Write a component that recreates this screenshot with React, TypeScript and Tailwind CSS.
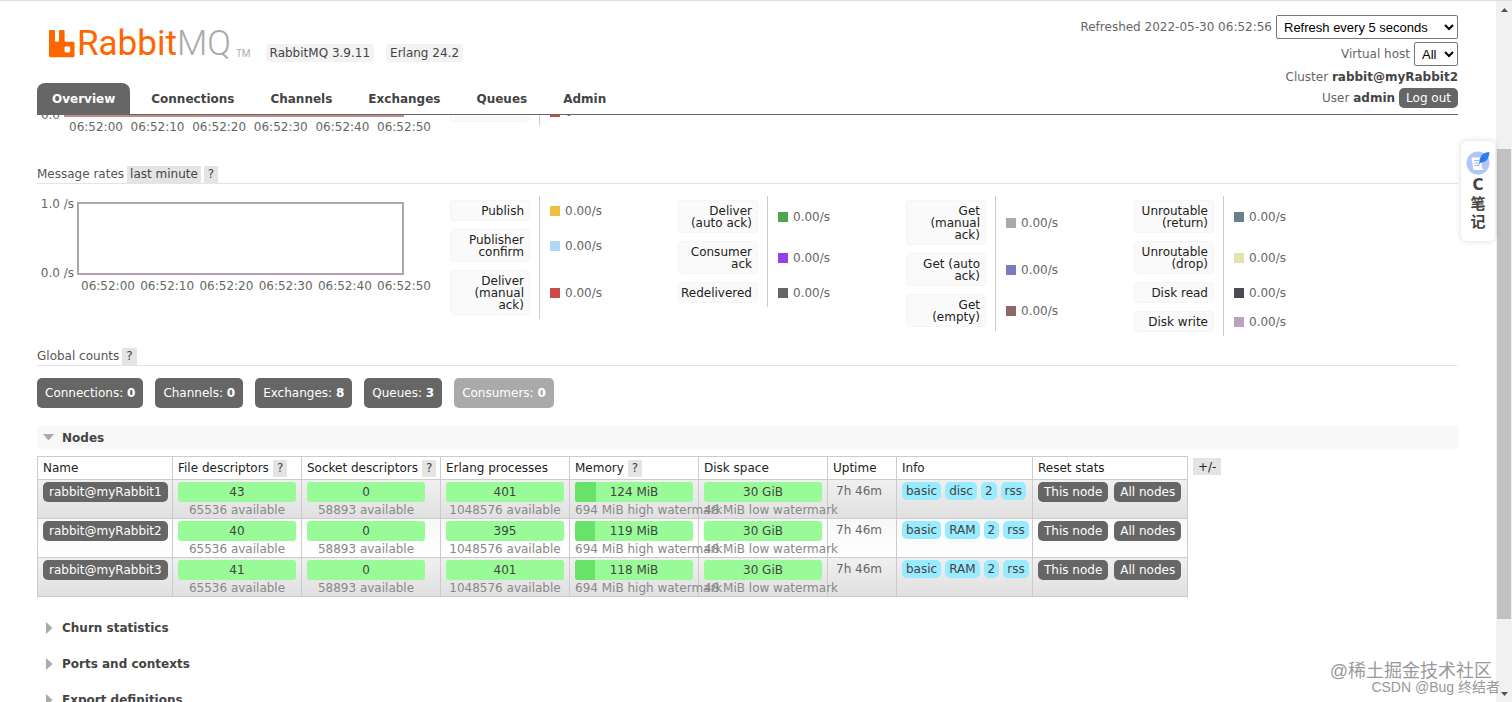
import { ReactNode } from "react";

const TABS = ["Overview", "Connections", "Channels", "Exchanges", "Queues", "Admin"];

const TIMES = ["06:52:00", "06:52:10", "06:52:20", "06:52:30", "06:52:40", "06:52:50"];

const RATES = [
  [
    { label: "Publish", color: "bg-[#edc240]" },
    { label: "Publisher\nconfirm", color: "bg-[#afd8f8]" },
    { label: "Deliver\n(manual\nack)", color: "bg-[#cb4b4b]" },
  ],
  [
    { label: "Deliver\n(auto ack)", color: "bg-[#4da74d]" },
    { label: "Consumer\nack", color: "bg-[#9440ed]" },
    { label: "Redelivered", color: "bg-[#666666]" },
  ],
  [
    { label: "Get\n(manual\nack)", color: "bg-[#aaaaaa]" },
    { label: "Get (auto\nack)", color: "bg-[#7c79c3]" },
    { label: "Get\n(empty)", color: "bg-[#8e6767]" },
  ],
  [
    { label: "Unroutable\n(return)", color: "bg-[#67808e]" },
    { label: "Unroutable\n(drop)", color: "bg-[#e5e4ae]" },
    { label: "Disk read", color: "bg-[#4b4a55]" },
    { label: "Disk write", color: "bg-[#bba3bf]" },
  ],
];

const COUNTS = [
  { label: "Connections", value: 0 },
  { label: "Channels", value: 0 },
  { label: "Exchanges", value: 8 },
  { label: "Queues", value: 3 },
  { label: "Consumers", value: 0, disabled: true },
];

const NODES = [
  { name: "rabbit@myRabbit1", fd: 43, procs: 401, mem: 124, type: "disc" },
  { name: "rabbit@myRabbit2", fd: 40, procs: 395, mem: 119, type: "RAM" },
  { name: "rabbit@myRabbit3", fd: 41, procs: 401, mem: 118, type: "RAM" },
];

const MEM_LIMIT = 694;

function Help() {
  return (
    <button className="h-[17px] bg-[#e4e4e4] px-1 text-[#444]">?</button>
  );
}

function Heading({ children }: { children: ReactNode }) {
  return (
    <h2 className="flex h-[19px] items-center gap-[3px] border-b border-[#e4e4e4] text-[#555]">
      {children}
    </h2>
  );
}

type Rate = { label: string; color: string };

function Legend({ items, value }: { items: Rate[]; value: string }) {
  return (
    <table className="border-collapse self-start">
      <tbody>
        {items.map(({ label, color }) => (
          <tr key={label}>
            <th className="border-r border-[#ccc] py-1 pr-[9px] font-normal">
              <div className="w-20 whitespace-pre-line rounded-sm border border-[#f5f5f5] bg-[#fafafa] pt-1 pr-[5px] pb-[3px] text-right leading-3 text-[#222]">
                {label}
              </div>
            </th>
            <td className="pl-2.5">
              <div className="flex items-center gap-[5px]">
                <span className={`size-2.5 ${color}`} />
                {value}
              </div>
            </td>
          </tr>
        ))}
      </tbody>
    </table>
  );
}

function Bar({ value, note, used = 0 }: { value: string; note: string; used?: number }) {
  return (
    <div className="w-[118px] text-center whitespace-nowrap">
      <div className="relative h-5 overflow-hidden rounded-[3px] bg-[#98fb98] leading-5 text-[#444]">
        <div
          className="absolute inset-y-0 left-0 bg-[#69e269]"
          style={{ width: `${used}%` }}
        />
        <span className="relative">{value}</span>
      </div>
      <div className="leading-4 text-[#888]">{note}</div>
    </div>
  );
}

function Logo() {
  return (
    <a href="#" className="flex items-end" aria-label="RabbitMQ">
      <svg width="26" height="28" viewBox="0 0 26 28" className="mb-1">
        <path
          fill="#ff6600"
          d="M1.200 0h3.600c.7 0 1.200.5 1.200 1.200v9.300c0 .8.400 1.200 1.200 1.200h1.600c.8 0 1.200-.4 1.200-1.200V1.200C10 .5 10.500 0 11.200 0h3.200c.7 0 1.200.5 1.200 1.200v9.300c0 .8.400 1.200 1.200 1.200h7.200c.8 0 1.500.6 1.500 1.400v12.700c0 .8-.6 1.400-1.400 1.400H1.400C.6 27.200 0 26.600 0 25.800V1.200C0 .5.500 0 1.200 0Zm14.300 18v3c0 .8.600 1.400 1.400 1.400h2.900c.8 0 1.400-.6 1.400-1.400v-3c0-.8-.6-1.400-1.400-1.400h-2.900c-.8 0-1.400.6-1.400 1.400Z"
          fillRule="evenodd"
        />
      </svg>
      <span className="ml-0.5 font-[Roboto] text-[35px] leading-9 text-[#ff6600]">
        Rabbit<span className="font-light text-[#aaa]">MQ</span>
      </span>
      <span className="ml-[5px] font-[Roboto] text-[10px] leading-4 text-[#b0b0b0]">TM</span>
    </a>
  );
}

function Header() {
  return (
    <header className="flex h-[114px] shrink-0 justify-between border-b border-[#666] bg-white">
      <div className="flex flex-col justify-between">
        <div className="flex items-end gap-[15px] pt-[25px] pl-3">
          <Logo />
          <div className="flex gap-3 text-[#444]">
            <span className="rounded-sm bg-[#f3f3f3] px-1 leading-[18px]">RabbitMQ 3.9.11</span>
            <span className="rounded-sm bg-[#f3f3f3] px-1 leading-[18px]">Erlang 24.2</span>
          </div>
        </div>
        <nav className="flex gap-1.5">
          {TABS.map((tab) => (
            <a
              key={tab}
              href="#"
              className={`rounded-t-lg px-[15px] pt-px leading-[30px] font-bold ${
                tab === "Overview" ? "bg-[#666] text-white" : "text-[#444]"
              }`}
            >
              {tab}
            </a>
          ))}
        </nav>
      </div>

      <div className="flex flex-col items-end pt-3.5">
        <label className="flex items-center gap-1">
          Refreshed 2022-05-30 06:52:56
          <select className="h-6 w-[182px] rounded-xs border border-[#767676] bg-white px-[3px] font-['Liberation_Sans'] text-[13px] text-black">
            <option>Refresh every 5 seconds</option>
          </select>
        </label>
        <label className="mt-[3px] flex items-center gap-1">
          Virtual host
          <select className="h-6 w-11 rounded-xs border border-[#767676] bg-white px-[3px] font-['Liberation_Sans'] text-[13px] text-black">
            <option>All</option>
          </select>
        </label>
        <div className="leading-[22px]">
          Cluster <b className="text-[#444]">rabbit@myRabbit2</b>
        </div>
        <div className="flex items-center gap-1">
          <span>
            User <b className="text-[#444]">admin</b>
          </span>
          <button className="h-5 rounded-[5px] bg-[#666] px-[7px] text-white">
            Log out
          </button>
        </div>
      </div>
    </header>
  );
}

function NodesTable() {
  const head = "border border-[#ccc] px-[5px] text-left font-normal text-[#222]";
  const cell = "border border-[#ccc] px-[5px] pt-0.5 align-top";
  const button = "h-5 rounded-[5px] bg-[#666] px-1.5 text-white";
  return (
    <table className="w-[1150px] table-fixed border-collapse border border-[#bbb]">
      <colgroup>
        <col className="w-[135px]" />
        <col className="w-[129px]" />
        <col className="w-[139px]" />
        <col className="w-[129px]" />
        <col className="w-[129px]" />
        <col className="w-[129px]" />
        <col className="w-[69px]" />
        <col className="w-[136px]" />
        <col className="w-[155px]" />
      </colgroup>
      <thead>
        <tr className="h-[23px]">
          <th className={head}>Name</th>
          <th className={head}>
            <div className="flex items-center gap-1">File descriptors <Help /></div>
          </th>
          <th className={head}>
            <div className="flex items-center gap-1 whitespace-nowrap">Socket descriptors <Help /></div>
          </th>
          <th className={head}>Erlang processes</th>
          <th className={head}>
            <div className="flex items-center gap-1">Memory <Help /></div>
          </th>
          <th className={head}>Disk space</th>
          <th className={head}>Uptime</th>
          <th className={head}>Info</th>
          <th className={head}>Reset stats</th>
        </tr>
      </thead>
      <tbody>
        {NODES.map(({ name, fd, procs, mem, type }) => (
          <tr
            key={name}
            className="h-[39px] odd:bg-linear-to-b odd:from-[#f0f0f0] odd:to-[#e0e0e0] even:bg-linear-to-b even:from-[#f8f8f8] even:to-white"
          >
            <td className={cell}>
              <a href="#" className="inline-block rounded-[5px] bg-[#666] px-1.5 leading-5 text-white">
                {name}
              </a>
            </td>
            <td className={cell}><Bar value={`${fd}`} note="65536 available" /></td>
            <td className={cell}><Bar value="0" note="58893 available" /></td>
            <td className={cell}><Bar value={`${procs}`} note="1048576 available" /></td>
            <td className={cell}>
              <Bar
                value={`${mem} MiB`}
                note={`${MEM_LIMIT} MiB high watermark`}
                used={(mem / MEM_LIMIT) * 100}
              />
            </td>
            <td className={cell}><Bar value="30 GiB" note="48 MiB low watermark" /></td>
            <td className="border border-[#ccc] pt-0.5 pl-2 align-top leading-[18px]">7h 46m</td>
            <td className={cell}>
              <div className="flex gap-1">
                {["basic", type, "2", "rss"].map((tag) => (
                  <abbr key={tag} className="rounded-[5px] bg-[#99ebff] px-1 leading-[18px] text-[#444]">
                    {tag}
                  </abbr>
                ))}
              </div>
            </td>
            <td className={cell}>
              <div className="flex gap-1.5 whitespace-nowrap">
                <button className={button}>This node</button>
                <button className={button}>All nodes</button>
              </div>
            </td>
          </tr>
        ))}
      </tbody>
    </table>
  );
}

function Scrollbar() {
  return (
    <div className="flex w-4 shrink-0 flex-col items-center bg-[#f1f1f1]">
      <svg width="7" height="4" viewBox="0 0 7 4" className="mt-[7px]">
        <path d="M3.500 0 7 4H0Z" fill="#505050" />
      </svg>
      <div className="flex w-full flex-1 flex-col px-px">
        <div className="flex-[137]" />
        <div className="flex-[470] bg-[#c1c1c1]" />
        <div className="flex-[73]" />
      </div>
      <svg width="7" height="4" viewBox="0 0 7 4" className="mb-1.5">
        <path d="M0 0h7L3.500 4Z" fill="#505050" />
      </svg>
    </div>
  );
}

function NotesWidget() {
  return (
    <button className="absolute top-[140px] right-[17px] flex h-[100px] w-[34px] flex-col items-center rounded-md bg-white pt-[9px] font-['Noto_Sans_CJK_SC',sans-serif] text-[15px] leading-[18px] font-bold text-[#444] shadow-[0_0_6px_rgba(0,0,0,0.15)]">
      <svg width="26" height="26" viewBox="0 0 26 26">
        <circle cx="13" cy="13" r="11.500" fill="#b4c6f5" />
        <path d="M7 7.500h10.500l-1 9.500 2 3H9.500Q7.500 20 8 17L6.500 8.500Z" fill="#fff" />
        <path d="M9 10.500h5M9.300 13h4M9.600 15.500h5" stroke="#9db6ee" strokeWidth="1" />
        <path d="M24.500 2c-6 .4-9.800 3-10.300 10.400l1.500.3C21.500 12.500 24 8.500 24.500 2Z" fill="#2f80f6" />
        <path d="M13.500 14.500 20 6.500" stroke="#1c5fd0" strokeWidth=".8" />
      </svg>
      <span className="font-['DejaVu_Sans']">C</span>
      <span>笔</span>
      <span>记</span>
    </button>
  );
}

export default function App() {
  return (
    <div className="relative flex h-screen overflow-hidden border-t border-[#ddd] bg-white font-['DejaVu_Sans',Verdana,sans-serif] text-[12px] leading-4 text-[#666]">
      <div className="flex min-w-0 flex-1 flex-col pr-[38px] pl-[37px]">
        <Header />

        <main className="min-h-0 flex-1 overflow-hidden">
          {/* tail of the queued messages chart, scrolled under the header */}
          <section className="flex h-[18px]">
            <div className="-mt-1.5 w-[413px] leading-3">
              <div className="flex items-center gap-1">
                <span className="w-[23px] text-right">0.0</span>
                <span className="h-1 w-[340px] bg-[#c08c8c]" />
              </div>
              <div className="flex w-[394px] justify-between pl-8">
                {TIMES.map((t) => (
                  <span key={t}>{t}</span>
                ))}
              </div>
            </div>
            <div className="-mt-[18px]">
              <Legend items={[{ label: "\u00a0", color: "bg-[#cb4b4b]" }]} value="0" />
            </div>
          </section>

          <section className="mt-8">
            <Heading>
              Message rates
              <button className="h-[17px] bg-[#e4e4e4] px-[3px] text-[#444]">last minute</button>
              <Help />
            </Heading>
            <div className="flex pt-3">
              <div className="w-[413px] pt-0.5 leading-3">
                <div className="flex gap-[3px]">
                  <div className="flex h-[81px] w-[37px] flex-col justify-between text-right whitespace-nowrap">
                    <span>1.0 /s</span>
                    <span>0.0 /s</span>
                  </div>
                  <div className="mt-1 h-[73px] w-[327px] border-2 border-[#aaa] border-b-[#b39fb5]" />
                </div>
                <div className="flex w-[394px] justify-between pt-px pl-11">
                  {TIMES.map((t) => (
                    <span key={t}>{t}</span>
                  ))}
                </div>
              </div>
              {RATES.map((items) => (
                <div key={items[0].label} className="w-[228px]">
                  <Legend items={items} value="0.00/s" />
                </div>
              ))}
            </div>
          </section>

          <section className="mt-[11px]">
            <Heading>
              Global counts <Help />
            </Heading>
            <div className="flex gap-3 pt-3">
              {COUNTS.map(({ label, value, disabled }) => (
                <a
                  key={label}
                  href="#"
                  className={`rounded-[5px] px-2 leading-[30px] text-white ${
                    disabled ? "bg-[#aaa]" : "bg-[#666]"
                  }`}
                >
                  {label}: <b>{value}</b>
                </a>
              ))}
            </div>
          </section>

          <section className="mt-[18px]">
            <h2 className="flex h-[23px] items-center gap-2 bg-[#f8f8f8] pl-1.5 font-bold text-[#444]">
              <svg width="11" height="7" viewBox="0 0 11 7">
                <path d="M0 0h11L5.500 6.500Z" fill="#aaa" />
              </svg>
              Nodes
            </h2>
            <div className="mt-[7px] flex items-start gap-[5px]">
              <NodesTable />
              <button className="mt-0.5 h-[17px] bg-[#e4e4e4] px-[5px] text-[#222]">+/-</button>
            </div>
          </section>

          <section className="mt-[13px]">
            {["Churn statistics", "Ports and contexts", "Export definitions"].map((title) => (
              <h2
                key={title}
                className="flex h-9 items-center gap-[9px] pl-[9px] font-bold text-[#444]"
              >
                <svg width="7" height="12" viewBox="0 0 7 12">
                  <path d="M0 0v12L6.500 6Z" fill="#aaa" />
                </svg>
                {title}
              </h2>
            ))}
          </section>
        </main>
      </div>

      <Scrollbar />
      <NotesWidget />

      <div className="absolute right-3 bottom-[7px] flex flex-col items-end font-['Liberation_Sans','Noto_Sans_CJK_SC',sans-serif] text-[#999]">
        <span className="pr-2 text-[18px] leading-4">@稀土掘金技术社区</span>
        <span className="text-[14px] leading-4">CSDN @Bug 终结者</span>
      </div>
    </div>
  );
}
